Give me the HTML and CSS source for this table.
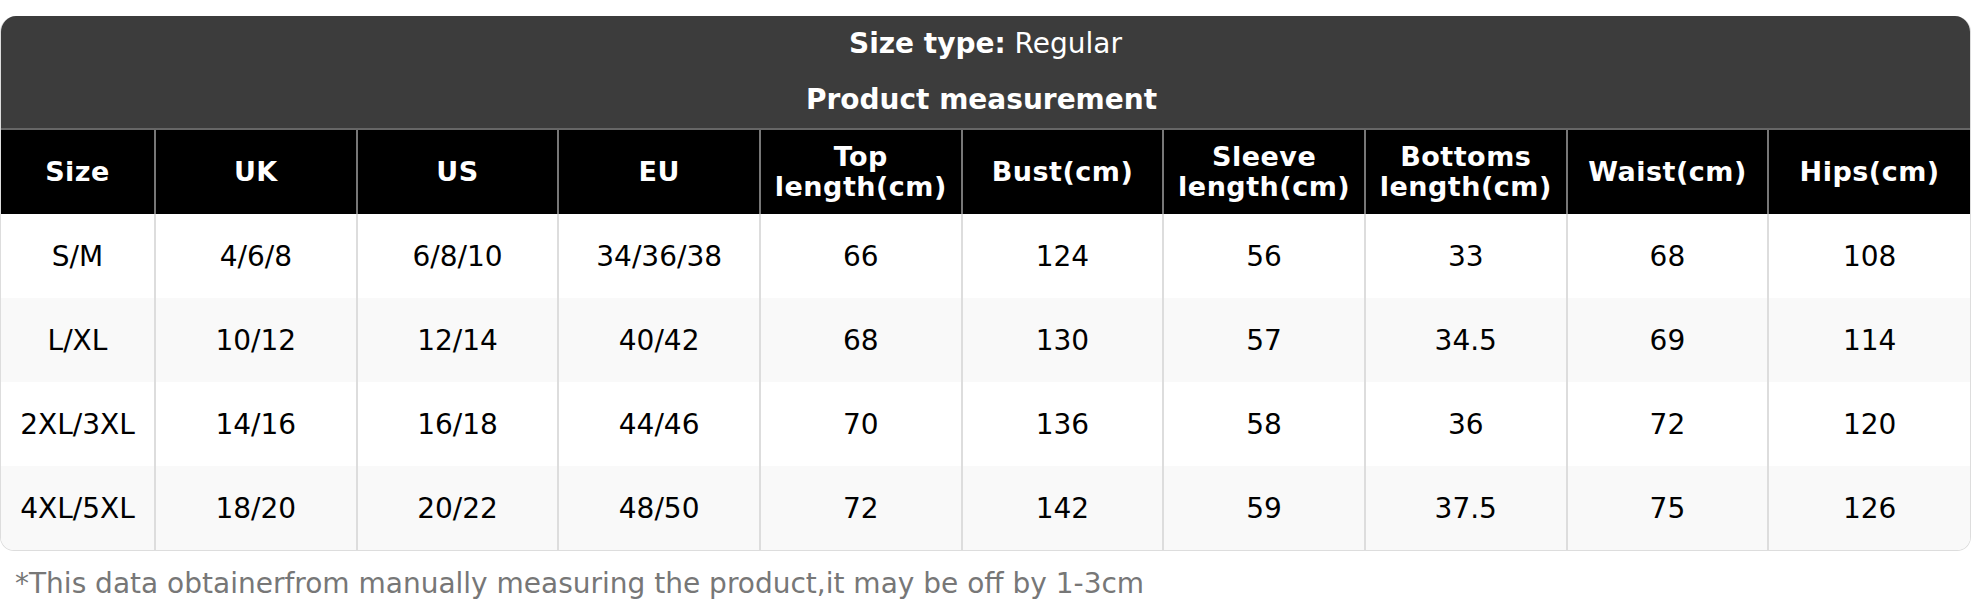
FILE: index.html
```html
<!DOCTYPE html>
<html>
  <head>
    <title>Size chart</title>
    <link rel="stylesheet" href="styles.css">
  </head>
  <body>
    <div class="chart">
      <div class="chart-head">
        <div class="head-line"><b>Size type:</b> Regular</div>
        <div class="head-line head-sub"><b>Product measurement</b></div>
      </div>
      <table class="size-table">
        <colgroup>
          <col class="col-size" />
          <col /><col /><col /><col /><col /><col /><col /><col /><col />
        </colgroup>
        <thead>
          <tr>
            <th>Size</th>
            <th>UK</th>
            <th>US</th>
            <th>EU</th>
            <th>Top<br />length(cm)</th>
            <th>Bust(cm)</th>
            <th>Sleeve<br />length(cm)</th>
            <th>Bottoms<br />length(cm)</th>
            <th>Waist(cm)</th>
            <th>Hips(cm)</th>
          </tr>
        </thead>
        <tbody>
          <tr>
            <td>S/M</td><td>4/6/8</td><td>6/8/10</td><td>34/36/38</td><td>66</td>
            <td>124</td><td>56</td><td>33</td><td>68</td><td>108</td>
          </tr>
          <tr>
            <td>L/XL</td><td>10/12</td><td>12/14</td><td>40/42</td><td>68</td>
            <td>130</td><td>57</td><td>34.5</td><td>69</td><td>114</td>
          </tr>
          <tr>
            <td>2XL/3XL</td><td>14/16</td><td>16/18</td><td>44/46</td><td>70</td>
            <td>136</td><td>58</td><td>36</td><td>72</td><td>120</td>
          </tr>
          <tr>
            <td>4XL/5XL</td><td>18/20</td><td>20/22</td><td>48/50</td><td>72</td>
            <td>142</td><td>59</td><td>37.5</td><td>75</td><td>126</td>
          </tr>
        </tbody>
      </table>
    </div>
    <p class="note">*This data obtainerfrom manually measuring the product,it may be off by 1-3cm</p>
  </body>
</html>
```

FILE: styles.css
```css
body {
  margin: 0;
  padding-top: 16px;
  background-color: #ffffff;
  font-family: "DejaVu Sans", "Noto Sans", sans-serif;
  color: #000000;
}
.chart {
  width: 1971px;
  border: 1px solid #dddddd;
  border-top: none;
  border-radius: 16px 16px 14px 14px;
  overflow: hidden;
  box-sizing: border-box;
}
.chart-head {
  background-color: #3c3c3c;
  color: #ffffff;
  text-align: center;
  font-size: 28px;
}
.head-line {
  height: 56px;
  line-height: 56px;
}
.head-sub {
  padding-right: 8px;
}
.size-table {
  width: 100%;
  table-layout: fixed;
  border-collapse: collapse;
}
.col-size {
  width: 154px;
}
.size-table th {
  height: 84px;
  padding: 0;
  background-color: #000000;
  color: #ffffff;
  font-size: 27px;
  font-weight: bold;
  line-height: 30px;
  letter-spacing: 0.5px;
  border-top: 2px solid #666666;
  border-left: 2px solid #777777;
}
.size-table td {
  height: 84px;
  padding: 0;
  text-align: center;
  font-size: 28px;
  border-left: 2px solid #dddddd;
}
.size-table th:first-child,
.size-table td:first-child {
  border-left: none;
}
.size-table tbody tr:nth-child(even) {
  background-color: #f9f9f9;
}
.note {
  margin: 0;
  padding: 16px 0 0 15px;
  font-size: 28px;
  color: #777777;
}
```
